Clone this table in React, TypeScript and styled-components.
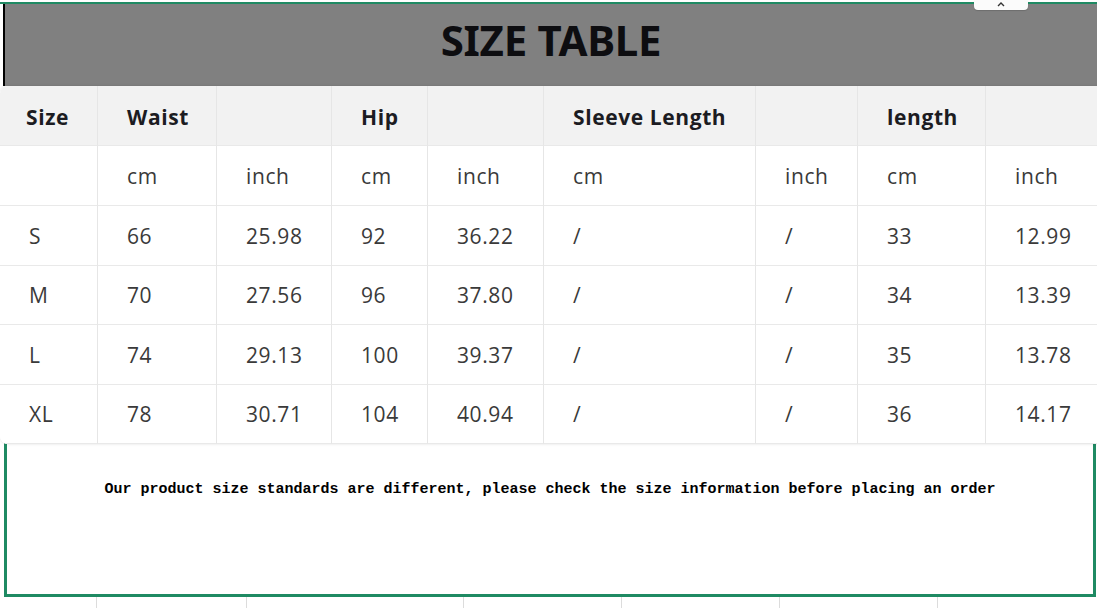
import React from "react";
import styled, { createGlobalStyle } from "styled-components";

const Global = createGlobalStyle`
  html, body { margin: 0; padding: 0; background: #ffffff; }
  #root { width: 1097px; height: 608px; overflow: hidden; }
`;

const GREEN = "#1f8a63";

const Page = styled.div`
  position: relative;
  width: 1097px;
  height: 608px;
  overflow: hidden;
  background: #ffffff;
  padding-top: 2px;
  box-sizing: border-box;
  display: flex;
  flex-direction: column;
`;

const TopRule = styled.div`
  height: 2px;
  background: ${GREEN};
  flex: none;
`;

const TitleBar = styled.div`
  margin-left: 3px;
  height: 82px;
  flex: none;
  border-left: 2px solid #000;
  background: #808080;
  display: flex;
  align-items: center;
  justify-content: center;
  font-family: "Noto Sans", "Open Sans", sans-serif;
  font-weight: 700;
  font-size: 42px;
  letter-spacing: -0.3px;
  color: #0d0d10;
  padding-bottom: 11px;
  box-sizing: border-box;
`;

const Tab = styled.div`
  position: absolute;
  left: 974px;
  top: 0;
  width: 54px;
  height: 10px;
  background: #fbfbfb;
  border-radius: 0 0 4px 4px;
  box-shadow: 0 1px 1px rgba(0, 0, 0, 0.15);
  display: flex;
  justify-content: center;
  align-items: flex-start;
`;

const Table = styled.div`
  display: grid;
  grid-template-columns: 98px 119px 115px 96px 116px 212px 102px 128px 119px;
  width: 1105px;
  flex: none;
  border-radius: 8px;
  overflow: hidden;
  background: #fff;
  box-shadow: 0 0 3px rgba(0, 0, 0, 0.12);
  position: relative;
  z-index: 1;
`;

const Cell = styled.div<{ $head?: boolean; $h: number }>`
  height: ${(p) => p.$h}px;
  box-sizing: border-box;
  display: flex;
  align-items: center;
  padding-left: 29px;
  padding-top: ${(p) => (p.$head ? 2 : 0)}px;
  border-right: 1px solid #e6e6e6;
  border-bottom: 1px solid #e9e9e9;
  background: ${(p) => (p.$head ? "#f2f2f2" : "#ffffff")};
  font-family: "Open Sans", "Noto Sans", sans-serif;
  font-size: 21px;
  letter-spacing: 0.6px;
  font-weight: ${(p) => (p.$head ? 700 : 400)};
  color: ${(p) => (p.$head ? "#1c1c22" : "#3a3a3a")};
  white-space: nowrap;
  &:first-child { padding-left: 26px; }
`;

const Notice = styled.div`
  margin-left: 4px;
  width: 1092px;
  height: 155px;
  flex: none;
  box-sizing: border-box;
  border: 3px solid ${GREEN};
  border-top: none;
  display: flex;
  justify-content: center;
  padding-top: 39px;
  font-family: "Liberation Mono", "DejaVu Sans Mono", monospace;
  font-weight: 700;
  font-size: 15px;
  color: #000;
  margin-top: -2px;
`;

const GridRow = styled.div`
  display: flex;
  flex: 1;
`;

const GridCell = styled.div<{ $w: number }>`
  width: ${(p) => p.$w}px;
  flex: none;
  border-right: 1px solid #dcdcdc;
  box-sizing: border-box;
`;

const header = ["Size", "Waist", "", "Hip", "", "Sleeve Length", "", "length", ""];
const units = ["", "cm", "inch", "cm", "inch", "cm", "inch", "cm", "inch"];
const rows = [
  ["S", "66", "25.98", "92", "36.22", "/", "/", "33", "12.99"],
  ["M", "70", "27.56", "96", "37.80", "/", "/", "34", "13.39"],
  ["L", "74", "29.13", "100", "39.37", "/", "/", "35", "13.78"],
  ["XL", "78", "30.71", "104", "40.94", "/", "/", "36", "14.17"],
];
const heights = [60, 60, 60, 59, 60, 59];

export default function App() {
  const all = [header, units, ...rows];
  return (
    <Page>
      <Global />
      <TopRule />
      <TitleBar>SIZE TABLE</TitleBar>
      <Tab>
        <svg width="8" height="5" viewBox="0 0 8 5" style={{ marginTop: 2 }}>
          <path d="M1 4 L4 1 L7 4" stroke="#333" strokeWidth="1.4" fill="none" />
        </svg>
      </Tab>
      <Table>
        {all.map((r, i) =>
          r.map((c, j) => (
            <Cell key={`${i}-${j}`} $head={i === 0} $h={heights[i]}>
              {c}
            </Cell>
          ))
        )}
      </Table>
      <Notice>
        Our product size standards are different, please check the size information before placing an order
      </Notice>
      <GridRow>
        <GridCell $w={97} />
        <GridCell $w={150} />
        <GridCell $w={217} />
        <GridCell $w={158} />
        <GridCell $w={158} />
        <GridCell $w={158} />
      </GridRow>
    </Page>
  );
}
